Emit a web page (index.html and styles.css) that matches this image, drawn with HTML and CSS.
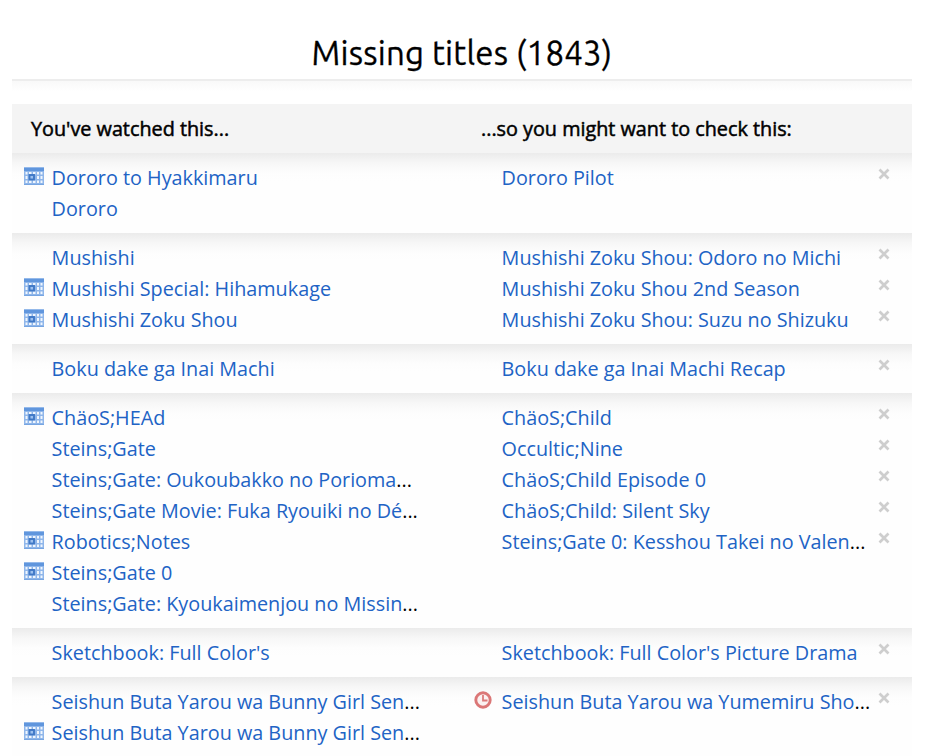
FILE: index.html
```
<!DOCTYPE html>
<html lang="en">
<head>
<meta charset="utf-8">
<title>Missing titles</title>
<link rel="stylesheet" href="styles.css">
</head>
<body>
<svg class="sprites" aria-hidden="true">
  <symbol id="cal" viewBox="0 0 20 18">
    <rect width="20" height="18" fill="#8fb6ea"/>
    <rect width="20" height="4" fill="#6096dd"/>
    <rect width="20" height="1" fill="#94b9ea"/>
    <path fill="#f0f6fd" d="M1.500 5h2v2.500h-2zM5 5h2.500v2.500h-2.500zM9 5h2.500v2.500h-2.500zM13 5h2v2.500h-2zM16.500 5h2v2.500h-2zM1.500 9h2v3h-2zM13 9h2v3h-2zM16.500 9h2v3h-2zM1.500 13.500h2v2.500h-2zM5 13.500h2.500v2.500h-2.500zM9 13.500h2.500v2.500h-2.500zM13 13.500h2v2.500h-2zM16.500 13.500h2v2.500h-2z"/>
    <rect x="5.500" y="8" width="4.500" height="4.500" fill="#9cc0ee" stroke="#3f78c6" stroke-width="1.900"/>
    <rect y="17" width="20" height="1" fill="#76a5e2"/>
  </symbol>
  <symbol id="clock" viewBox="0 0 18 18">
    <circle cx="9" cy="9" r="7.200" fill="#fbf1f1" stroke="#db7777" stroke-width="2.900"/>
    <path d="M9 4v5.500h4.500" fill="none" stroke="#dc7b7b" stroke-width="1.800"/>
  </symbol>
  <symbol id="x" viewBox="0 0 12 12">
    <path d="M1.500 1.500l9 9M10.500 1.500l-9 9" stroke="#cecece" stroke-width="2.700"/>
  </symbol>
</svg>
<main>
  <h1>Missing titles (1843)</h1>
  <section class="table">
    <header class="head"><div>You've watched this...</div><div>...so you might want to check this:</div></header>
    <div class="row">
      <ul>
        <li><svg class="cal"><use href="#cal"/></svg><a>Dororo to Hyakkimaru</a></li>
        <li><a>Dororo</a></li>
      </ul>
      <ul>
        <li><a>Dororo Pilot</a><svg class="x"><use href="#x"/></svg></li>
      </ul>
    </div>
    <div class="row">
      <ul>
        <li><a>Mushishi</a></li>
        <li><svg class="cal"><use href="#cal"/></svg><a>Mushishi Special: Hihamukage</a></li>
        <li><svg class="cal"><use href="#cal"/></svg><a>Mushishi Zoku Shou</a></li>
      </ul>
      <ul>
        <li><a>Mushishi Zoku Shou: Odoro no Michi</a><svg class="x"><use href="#x"/></svg></li>
        <li><a>Mushishi Zoku Shou 2nd Season</a><svg class="x"><use href="#x"/></svg></li>
        <li><a>Mushishi Zoku Shou: Suzu no Shizuku</a><svg class="x"><use href="#x"/></svg></li>
      </ul>
    </div>
    <div class="row">
      <ul>
        <li><a>Boku dake ga Inai Machi</a></li>
      </ul>
      <ul>
        <li><a>Boku dake ga Inai Machi Recap</a><svg class="x"><use href="#x"/></svg></li>
      </ul>
    </div>
    <div class="row">
      <ul>
        <li><svg class="cal"><use href="#cal"/></svg><a>ChäoS;HEAd</a></li>
        <li><a>Steins;Gate</a></li>
        <li><a>Steins;Gate: Oukoubakko no Porioma</a>...</li>
        <li><a>Steins;Gate Movie: Fuka Ryouiki no Dé</a>...</li>
        <li><svg class="cal"><use href="#cal"/></svg><a>Robotics;Notes</a></li>
        <li><svg class="cal"><use href="#cal"/></svg><a>Steins;Gate 0</a></li>
        <li><a>Steins;Gate: Kyoukaimenjou no Missin</a>...</li>
      </ul>
      <ul>
        <li><a>ChäoS;Child</a><svg class="x"><use href="#x"/></svg></li>
        <li><a>Occultic;Nine</a><svg class="x"><use href="#x"/></svg></li>
        <li><a>ChäoS;Child Episode 0</a><svg class="x"><use href="#x"/></svg></li>
        <li><a>ChäoS;Child: Silent Sky</a><svg class="x"><use href="#x"/></svg></li>
        <li><a>Steins;Gate 0: Kesshou Takei no Valen</a>...<svg class="x"><use href="#x"/></svg></li>
      </ul>
    </div>
    <div class="row">
      <ul>
        <li><a>Sketchbook: Full Color's</a></li>
      </ul>
      <ul>
        <li><a>Sketchbook: Full Color's Picture Drama</a><svg class="x"><use href="#x"/></svg></li>
      </ul>
    </div>
    <div class="row">
      <ul>
        <li><a>Seishun Buta Yarou wa Bunny Girl Sen</a>...</li>
        <li><svg class="cal"><use href="#cal"/></svg><a>Seishun Buta Yarou wa Bunny Girl Sen</a>...</li>
      </ul>
      <ul>
        <li><svg class="clock"><use href="#clock"/></svg><a>Seishun Buta Yarou wa Yumemiru Sho</a>...<svg class="x"><use href="#x"/></svg></li>
      </ul>
    </div>
  </section>
</main>
</body>
</html>
```
FILE: styles.css
```
* { box-sizing: border-box; }
html { overflow: hidden; }
body {
  margin: 0;
  height: 756px;
  overflow: hidden;
  background: #fff;
  color: #000;
  font: 19.8px/31px "Open Sans", sans-serif;
}
.sprites { display: none; }
main { width: 900px; margin-left: 12px; }
h1 {
  margin: 0 0 10px;
  height: 94px;
  padding-top: 31px;
  font: 400 33px/43px Ubuntu, "Noto Sans", sans-serif;
  letter-spacing: 0.2px;
  text-align: center;
  -webkit-text-stroke: 0.3px #000;
  background: linear-gradient(#ededed, #ededed) 0 79px / 100% 2px no-repeat,
    linear-gradient(#f9f9f9, #fff) 0 81px / 100% 11px no-repeat;
}
.head, .row { display: grid; grid-template-columns: 450px 450px; }
.head {
  height: 49px;
  padding-top: 9px;
  background: #f4f4f4;
  -webkit-text-stroke: 0.5px #000;
}
.head div { padding-left: 19px; }
.row {
  padding: 9px 0;
  background: linear-gradient(#ebebeb, #f7f7f7 10px, #fdfdfd 20px, #fefefe 28px) 0 0 / 100% 28px no-repeat #fefefe;
}
ul { margin: 0; padding: 0 0 0 39.6px; list-style: none; }
li { position: relative; height: 31px; white-space: nowrap; }
a { color: #2163c5; }
.cal, .clock, .x { position: absolute; }
.cal { left: -27.6px; top: 5px; width: 20px; height: 18px; }
.clock { left: -27.6px; top: 5px; width: 18px; height: 18px; }
.x { left: 376.4px; top: 6px; width: 12px; height: 12px; }
```
